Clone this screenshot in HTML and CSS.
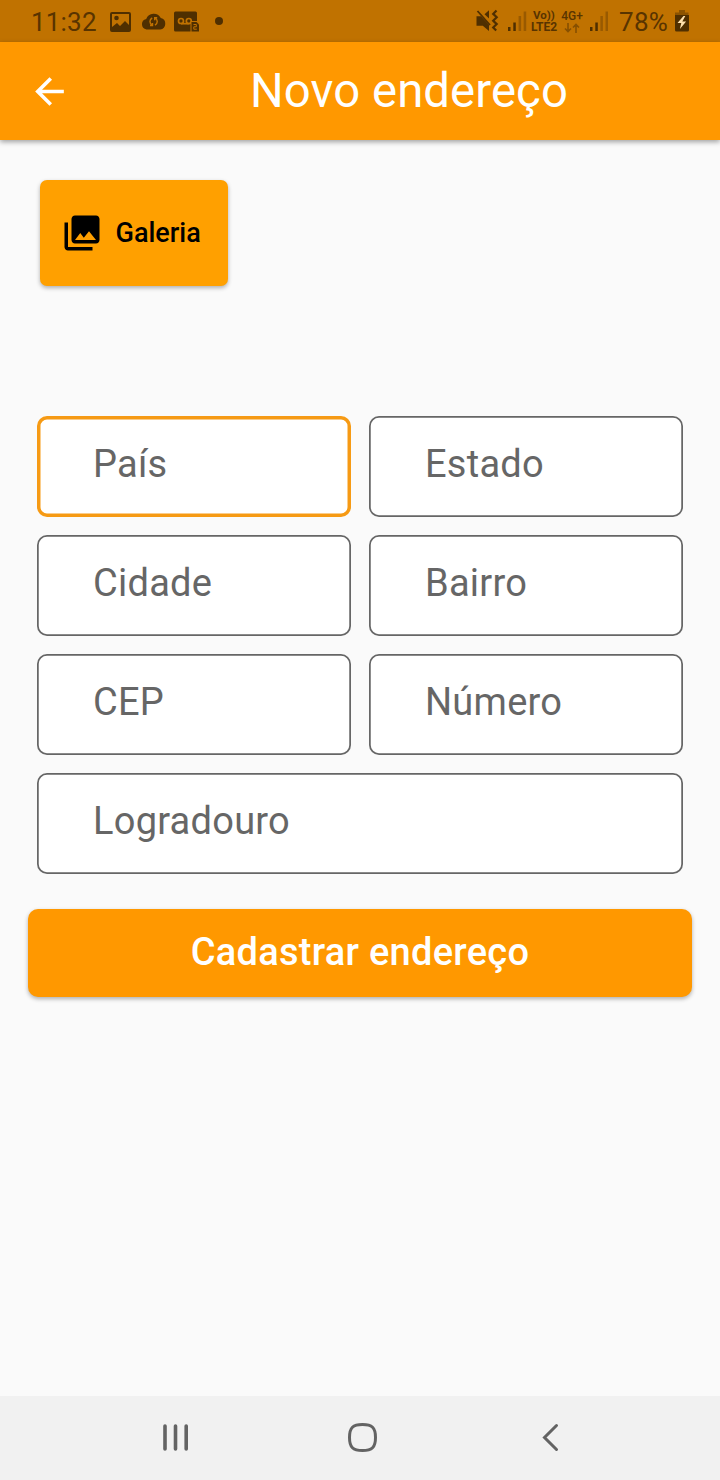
FILE: index.html
```html
<!DOCTYPE html>
<html lang="pt-BR">
<head>
<meta charset="utf-8">
<title>Novo endereço</title>
<link rel="stylesheet" href="styles.css">
</head>
<body>
<div class="screen">
  <div class="status">
    <span class="status-time">11:32</span>
    <svg class="status-left" width="118" height="42" viewBox="108 0 118 42" fill="#4f2f00">
      <path fill-rule="evenodd" d="M112 12h17q2 0 2 2v16q0 2-2 2h-17q-2 0-2-2V14q0-2 2-2zM112 14v13l5-4 3 3 5-5 4 4V14z"/>
      <circle cx="116.500" cy="18" r="2.300"/>
      <path d="M146.500 29.500a5.400 5.400 0 0 1-.3-10.600 8 8 0 0 1 14.600-.8 5.800 5.800 0 0 1-.6 11.400z"/>
      <path d="M152.200 18c-3 1.500-3 5.200 0 7.200M155 18c3 1.800 3 5.400 0 7.200M150 25.500h2.500v-2.500M157.200 17.700h-2.500v2.500" fill="none" stroke="#c07200" stroke-width="1.400"/>
      <path d="M175.500 11.500h20q1.500 0 1.500 1.500v8h-6.500v10.500h-15q-1.500 0-1.500-1.500V13q0-1.500 1.500-1.500z"/>
      <g fill="none" stroke="#c07200" stroke-width="1.700"><circle cx="181" cy="21" r="2.500"/><circle cx="188.800" cy="21" r="2.500"/><path d="M181 23.700h8.500"/></g>
      <path d="M191.500 22h5l2.500 2.500V31.500h-7.500z"/>
      <path d="M193.500 24.500h2.800v2.300h-2.500v2.400h3" fill="none" stroke="#c07200"/>
      <circle cx="219" cy="21" r="4"/>
    </svg>
    <svg class="status-mute" width="54" height="42" viewBox="474 0 54 42" fill="#4f2f00">
      <path d="M476.500 16.300h4.500l8 8.500V31l-6.200-5.300h-6.300zM484.500 14.200l4.500-4V18.500z"/>
      <path d="M477.500 11l12.500 14" stroke="#4f2f00" stroke-width="1.800"/>
      <path d="M496.500 10.500l-3.300 3.400 3.500 3.400-3.500 3.400 3.500 3.400-3.500 3.400 3 3" fill="none" stroke="#4f2f00" stroke-width="2.200"/>
      <path d="M508 27h2.500v4H508zM513.300 22.500h2.500V31h-2.500z"/><path opacity=".35" d="M518.600 16h2.500v15h-2.500zM523.700 11.500h2.500V31h-2.500z"/>
    </svg>
    <span class="status-net"><span class="net-line net-vo">Vo))</span><span class="net-line">LTE2</span></span>
    <span class="status-4g">4G+
      <svg width="16" height="10" viewBox="0 0 16 10" fill="none" stroke="#4f2f00" stroke-width="1.600" opacity=".5"><path d="M4 0v8.500M1 5.500l3 3 3-3M12 10V1.500M9 4.500l3-3 3 3"/></svg>
    </span>
    <svg class="status-signal" width="20" height="42" viewBox="589 0 20 42" fill="#4f2f00"><path d="M590 27h2.500v4H590zM595.300 22.500h2.500V31h-2.500z"/><path opacity=".35" d="M600.400 16h2.500v15h-2.500zM605.500 11.500h2.500V31h-2.500z"/></svg>
    <span class="status-percent">78%</span>
    <svg class="status-battery" width="18" height="42" viewBox="673 0 18 42"><path fill="#8c5300" d="M679 10h6v2.500h3.500V16h-13.500v-3.500h4z"/><path fill="#4f2f00" d="M675 15h14v15q0 1.500-1.500 1.500h-11q-1.500 0-1.500-1.500z"/><path fill="#ffe2ae" d="M683.500 16l-6 7h3.800l-1.400 6 6.200-7.500h-3.800l3-5.500z"/></svg>
  </div>
  <header class="appbar">
    <svg class="back" width="43" height="43" viewBox="0 0 24 24" fill="#fff"><path d="M20 11H7.830l5.590-5.590L12 4l-8 8 8 8 1.410-1.410L7.830 13H20v-2z"/></svg>
    <h1 class="title">Novo endereço</h1>
  </header>
  <main class="content">
    <button class="gallery">
      <svg width="42" height="42" viewBox="0 0 24 24"><path d="M22 16V4c0-1.100-.9-2-2-2H8c-1.100 0-2 .9-2 2v12c0 1.100.9 2 2 2h12c1.100 0 2-.9 2-2zm-11-4l2.030 2.710L16 11l4 5H8l3-4zM2 6v14c0 1.100.9 2 2 2h14v-2H4V6H2z"/></svg>
      <span>Galeria</span>
    </button>
    <form class="fields">
      <label class="field focused">País</label>
      <label class="field">Estado</label>
      <label class="field">Cidade</label>
      <label class="field">Bairro</label>
      <label class="field">CEP</label>
      <label class="field">Número</label>
      <label class="field wide">Logradouro</label>
    </form>
    <button class="submit">Cadastrar endereço</button>
  </main>
  <nav class="navbar">
    <svg width="28" height="30" viewBox="0 0 28 30" fill="none" stroke="#636363" stroke-width="3.600" stroke-linecap="round"><path d="M3 3v23M13.500 3v23M24.200 3v23"/></svg>
    <svg class="home" width="30" height="30" viewBox="0 0 30 30" fill="none" stroke="#636363" stroke-width="3"><path d="M14.500 1.500C24 1.500 27.500 4.500 27.500 14.500S24 27.500 14.500 27.500 1.500 24.500 1.500 14.500 5 1.500 14.500 1.500z"/></svg>
    <svg width="18" height="30" viewBox="0 0 18 30" fill="none" stroke="#636363" stroke-width="3" stroke-linecap="round"><path d="M15.500 2.500L3.500 14.500l12 12"/></svg>
  </nav>
</div>
</body>
</html>
```
FILE: styles.css
```css
* { box-sizing: border-box; }
body { margin: 0; font-family: Roboto, sans-serif; }
button { border: 0; font-family: inherit; }
svg { display: block; flex: none; }

.screen { width: 720px; height: 1480px; display: flex; flex-direction: column; background: #fafafa; }

.status { height: 42px; display: flex; align-items: center; background: #c07200; color: #583400; padding-left: 31px; white-space: nowrap; }
.status-time { width: 77px; font-size: 26px; line-height: 30px; letter-spacing: 0.2px; padding-top: 2px; }
.status-mute { margin-left: 248px; }
.status-net { width: 30px; margin-left: 1px; display: flex; flex-direction: column; align-items: center; font-size: 12px; line-height: 12px; font-weight: 700; }
.net-line { display: block; }
.net-vo { font-size: 11.500px; }
.status-4g { width: 24px; margin-left: 1px; font-size: 12px; line-height: 12px; font-weight: 500; display: flex; flex-direction: column; align-items: center; gap: 1px; }
.status-signal { margin-left: 5px; }
.status-percent { width: 54px; margin-left: 10px; font-size: 26px; line-height: 30px; letter-spacing: 0.3px; padding-top: 2px; }

.appbar { height: 98px; display: flex; align-items: center; padding-left: 28px; background: #ff9800; color: #fff; box-shadow: 0 2px 5px rgba(0,0,0,.36); z-index: 1; }
.title { margin: 0 0 0 179px; padding-bottom: 1px; font-size: 47.250px; line-height: 56px; font-weight: 400; letter-spacing: 0.100px; white-space: nowrap; }

.content { flex: 1; padding: 40px 28px 0; display: flex; flex-direction: column; }
.gallery { width: 188px; height: 106px; margin-left: 12px; padding: 0 0 0 20.500px; display: flex; align-items: center; gap: 13px; border-radius: 7px; background: #ffa000; color: #000; font-size: 27px; font-weight: 500; box-shadow: 0 2px 4px rgba(0,0,0,.3); }

.fields { margin: 130px 9px 0; display: grid; grid-template-columns: 1fr 1fr; gap: 18px; }
.field { height: 101px; padding: 26px 0 0 56px; font-size: 38px; line-height: 45px; letter-spacing: 0.250px; color: #666; background: #fff; border-radius: 10px; box-shadow: inset 0 0 0 1.750px #666; }
.focused { box-shadow: inset 0 0 0 3.500px #f69a14; }
.wide { grid-column: span 2; }

.submit { height: 88px; margin-top: 35px; padding: 0 0 2px; border-radius: 10px; background: #ff9800; color: #fff; font-size: 38px; font-weight: 500; letter-spacing: 0.280px; box-shadow: 0 2px 4px rgba(0,0,0,.3); }

.navbar { height: 84px; display: flex; align-items: center; justify-content: space-between; padding: 0 161px 1px 162px; background: #f1f1f1; }
.home { margin-right: 5px; }
```
